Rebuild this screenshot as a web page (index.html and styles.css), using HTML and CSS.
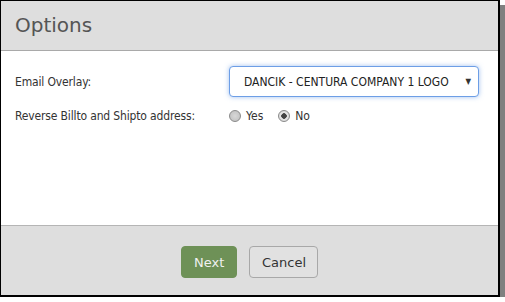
FILE: index.html
```html
<!DOCTYPE html>
<html lang="en">
<head>
    <meta charset="UTF-8">
    <title>Options</title>
    <link rel="stylesheet" href="styles.css">
</head>
<body>
    <!-- Options dialog -->
    <div class="dialog">
        <div class="dialog-header">Options</div>
        <div class="dialog-body">
            <div class="form-row">
                <label class="form-label">Email Overlay:</label>
                <div class="select-box">
                    <span class="select-text">DANCIK - CENTURA COMPANY 1 LOGO</span>
                    <span class="select-arrow">&#9660;</span>
                </div>
            </div>
            <div class="form-row radio-row">
                <label class="form-label">Reverse Billto and Shipto address:</label>
                <div class="radio-group">
                    <label class="radio-option"><input type="radio" name="reverse" class="radio"> Yes</label>
                    <label class="radio-option"><input type="radio" name="reverse" class="radio" checked> No</label>
                </div>
            </div>
        </div>
        <div class="dialog-footer">
            <button class="btn btn-next">Next</button>
            <button class="btn btn-cancel">Cancel</button>
        </div>
    </div>
</body>
</html>
```

FILE: styles.css
```css
body {
    margin: 0;
    padding: 0;
    background-color: #ffffff;
    font-family: 'DejaVu Sans Condensed', 'DejaVu Sans', sans-serif;
}
.dialog {
    width: 500px;
    height: 297px;
    box-sizing: border-box;
    border-style: solid;
    border-color: #000;
    border-width: 1px 2px 2px 1px;
    box-shadow: 5px 5px 0 #808080;
    display: flex;
    flex-direction: column;
    background-color: #fff;
}
.dialog-header {
    height: 50px;
    box-sizing: border-box;
    padding: 12px 14px 0;
    background-color: #dedede;
    border-bottom: 1px solid #a9a9a9;
    font-family: 'DejaVu Sans', sans-serif;
    font-size: 20px;
    color: #555;
}
.dialog-body {
    flex: 1;
    padding: 15px 14px 0;
}
.form-row {
    display: flex;
    align-items: center;
    font-size: 12px;
    color: #333;
}
.form-label {
    width: 214px;
    flex-shrink: 0;
    letter-spacing: -0.15px;
}
.select-box {
    width: 250px;
    height: 31px;
    box-sizing: border-box;
    display: flex;
    align-items: center;
    justify-content: space-between;
    padding: 0 7px 0 14px;
    border: 1px solid #6d9ee6;
    border-radius: 4px;
    box-shadow: 0 0 5px rgba(102, 153, 230, 0.6);
    background-color: #fff;
    color: #222;
}
.select-arrow {
    font-size: 8px;
    color: #333;
}
.radio-row {
    margin-top: 12px;
}
.radio-group {
    display: flex;
    gap: 15px;
}
.radio-option {
    display: flex;
    align-items: center;
    gap: 5px;
}
.radio {
    appearance: none;
    margin: 0;
    width: 12px;
    height: 12px;
    border-radius: 50%;
    border: 1px solid #8a8a8a;
    background: radial-gradient(circle, #d8d8d8 0, #bdbdbd 100%);
    box-sizing: border-box;
}
.radio:checked {
    background: radial-gradient(circle, #444 0, #444 2.5px, #e8e8e8 3px, #cfcfcf 100%);
}
.dialog-footer {
    height: 70px;
    box-sizing: border-box;
    border-top: 1px solid #b5b5b5;
    background-color: #dedede;
    display: flex;
    justify-content: center;
    align-items: flex-start;
    gap: 12px;
    padding-top: 20px;
}
.btn {
    height: 32px;
    padding: 0 12px;
    border-radius: 4px;
    font-family: 'DejaVu Sans', sans-serif;
    font-size: 13px;
    cursor: pointer;
}
.btn-next {
    width: 56px;
    background-color: #6e9157;
    border: 1px solid #6e9157;
    color: #f0f0f0;
}
.btn-cancel {
    width: 69px;
    background-color: #e1e1e1;
    border: 1px solid #a8a8a8;
    color: #333;
}
```
